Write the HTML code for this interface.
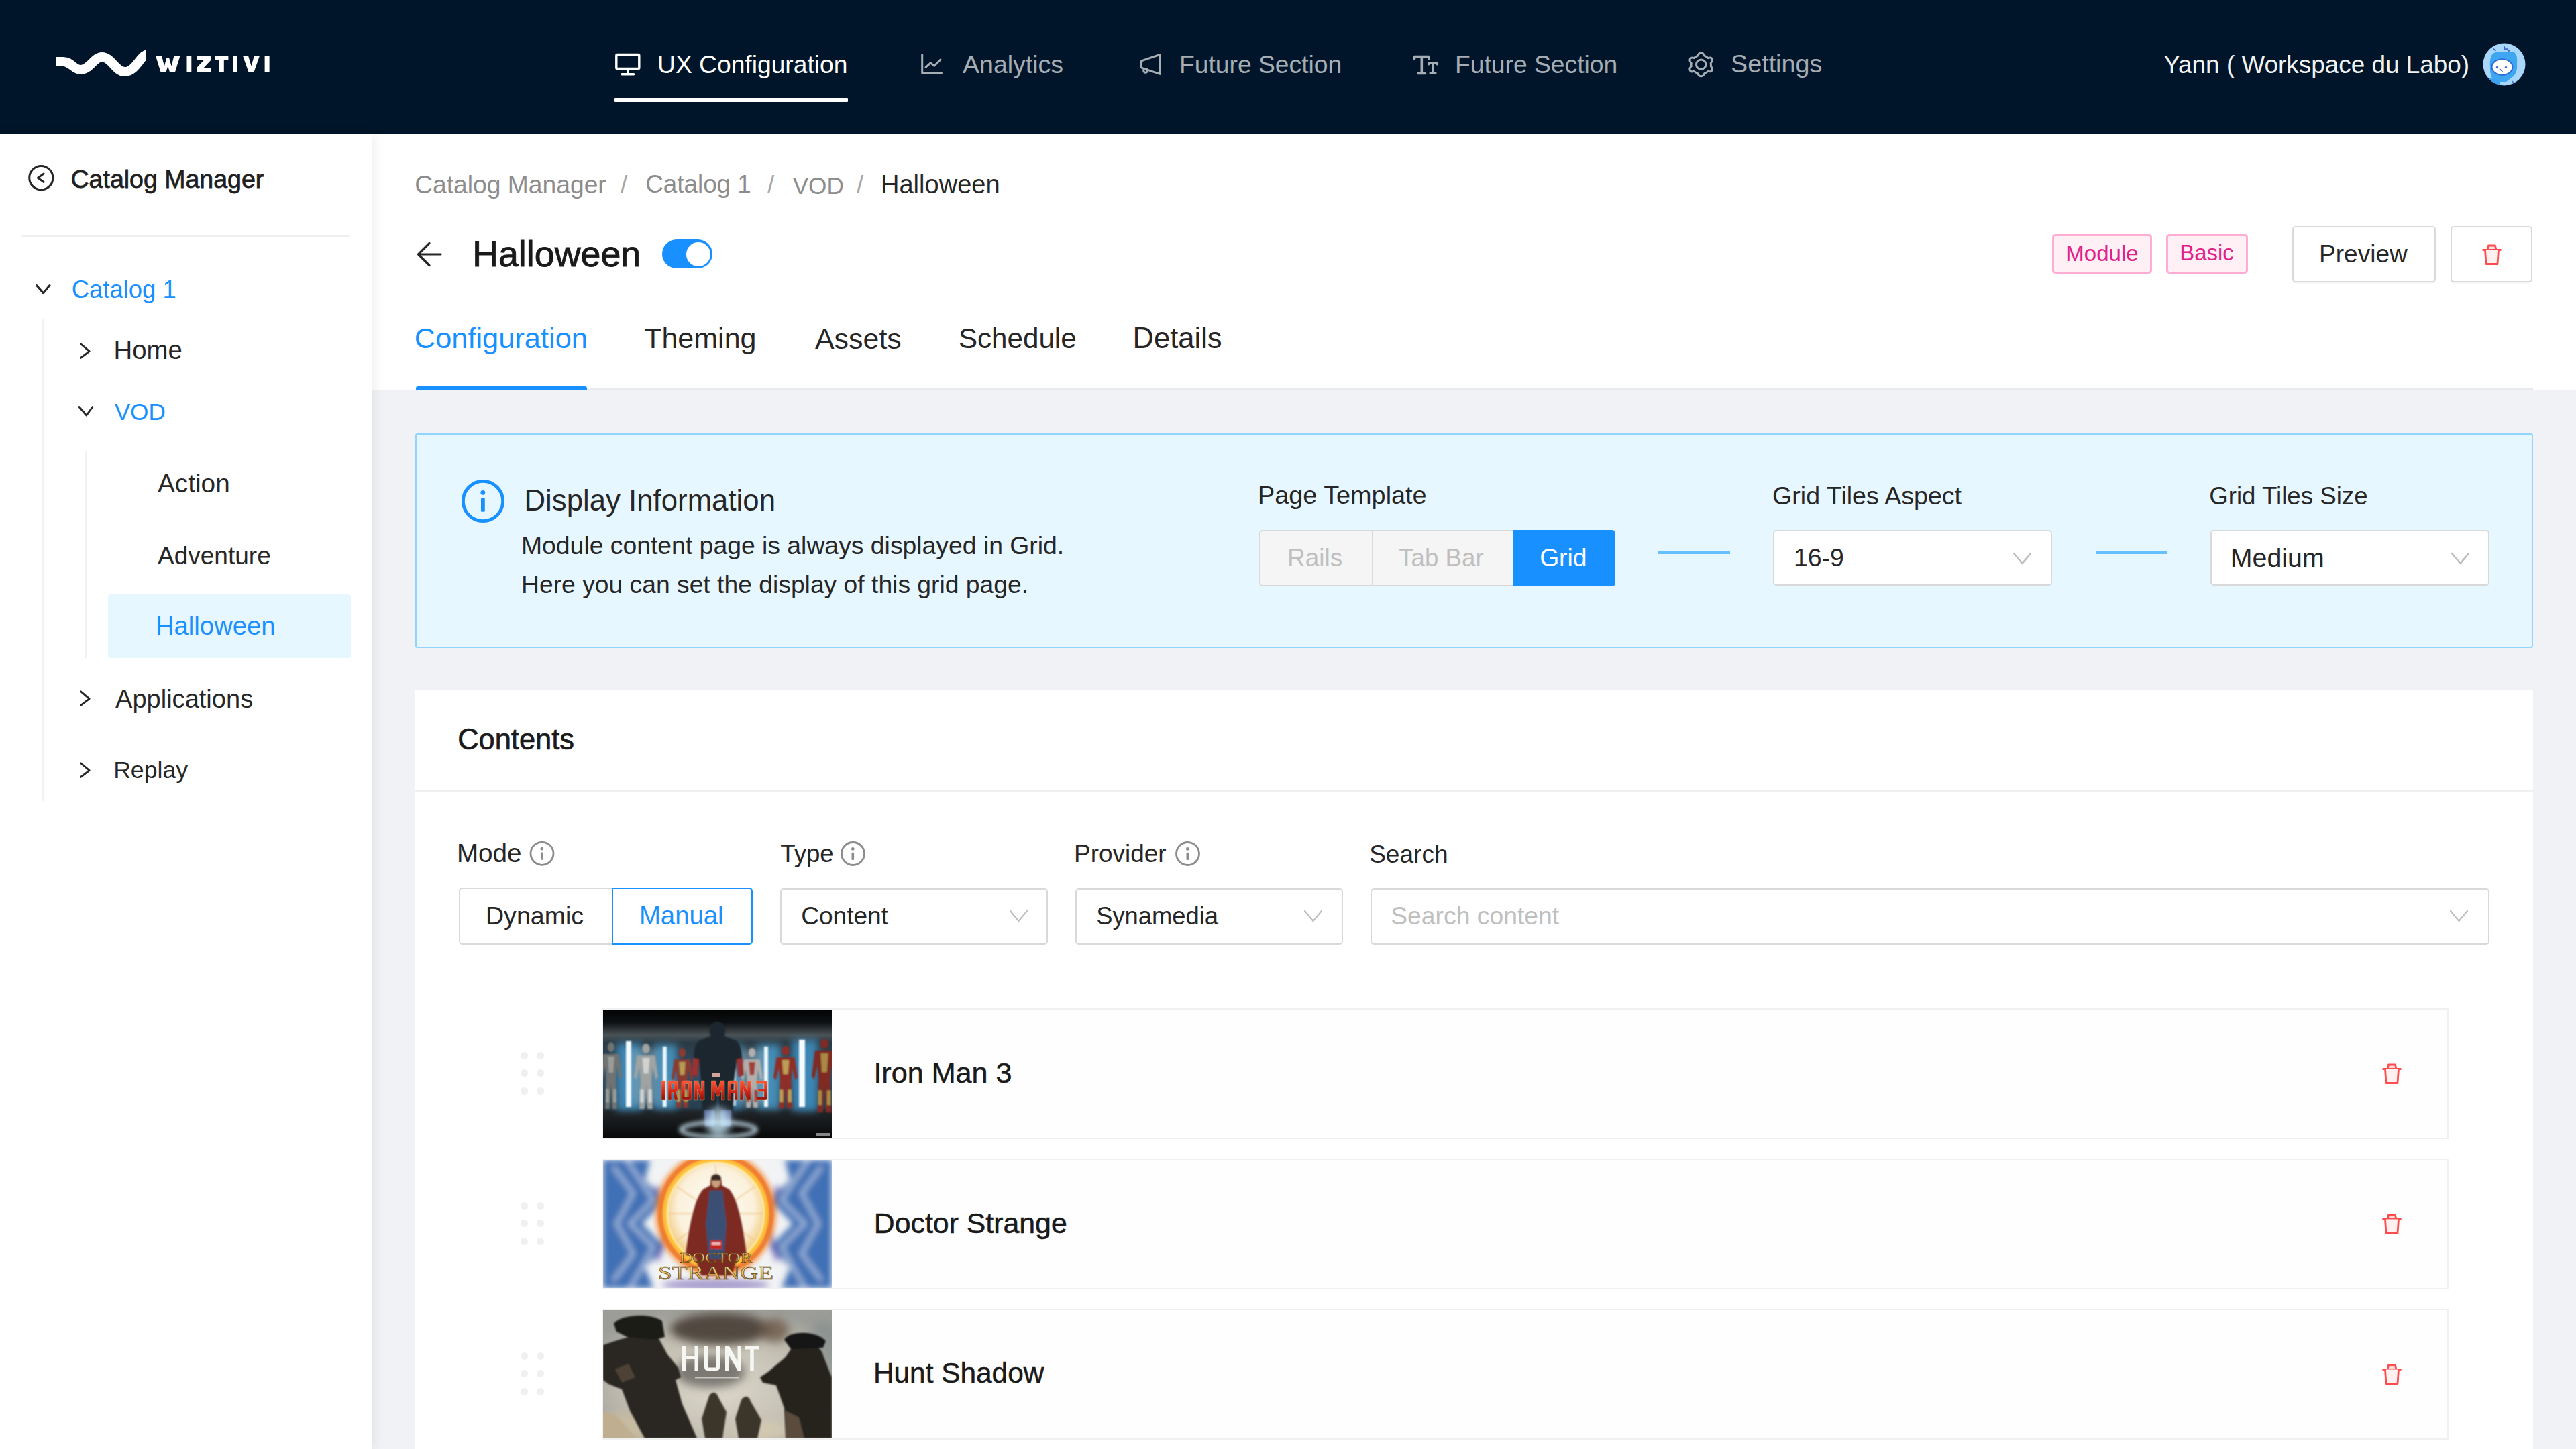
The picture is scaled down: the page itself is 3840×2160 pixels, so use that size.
<!DOCTYPE html>
<html><head><meta charset="utf-8"><title>Halloween</title><style>
html,body{margin:0;padding:0;width:3840px;height:2160px;overflow:hidden;background:#f0f2f5;font-family:"Liberation Sans",sans-serif;}
.a{position:absolute;box-sizing:border-box}
.t{position:absolute;white-space:nowrap;line-height:1;z-index:5}
svg{position:absolute;overflow:visible}
@media (max-width: 2400px){ html{zoom:0.5} }

</style></head><body>
<!-- top header -->
<div class="a" style="left:0;top:0;width:3840px;height:200px;background:#001529"></div>
<!-- logo -->
<svg style="left:0;top:0" width="420" height="200">
 <defs><clipPath id="lgc"><rect x="84" y="60" width="134" height="70"/></clipPath></defs>
 <path clip-path="url(#lgc)" d="M80,92 L94,92 C106,92 110,104 120,104 C134,104 140,85 152,85 C166,85 172,107 186,107 C200,107 208,88 214,84 C218,81 221,80 226,79" fill="none" stroke="#fff" stroke-width="14"/>
 <g fill="#fff">
  <polygon points="232,83.3 241,83.3 245,98.5 248.3,86.8 252.2,86.8 255.5,98.5 259.5,83.3 268.5,83.3 261,107.6 253,107.6 250.25,98.8 247.5,107.6 239.5,107.6"/>
  <rect x="278.5" y="83.3" width="6.8" height="24.3"/>
  <polygon points="293.5,83.3 314.6,83.3 314.6,89.5 303.8,101 314.6,101 314.6,107.6 293,107.6 293,101.3 303.8,89.8 293.5,89.8"/>
  <polygon points="320,83.3 340.4,83.3 340.4,89.8 333.8,89.8 333.8,107.6 326.8,107.6 326.8,89.8 320,89.8"/>
  <rect x="347" y="83.3" width="7" height="24.3"/>
  <polygon points="362,83.3 370,83.3 374.5,98.5 379,83.3 387,83.3 378.5,107.6 370.5,107.6"/>
  <rect x="394.6" y="83.3" width="7" height="24.3"/>
 </g>
</svg>
<!-- nav icons -->
<svg style="left:0;top:0" width="2600" height="200" fill="none" stroke-linejoin="round" stroke-linecap="round">
 <g stroke="#fff" stroke-width="3.4">
  <rect x="918.8" y="81.5" width="34" height="21" rx="1.5"/>
  <path d="M935.8,103 V110.5 M927,110.8 H944.6"/>
 </g>
 <g stroke="#a6adb4" stroke-width="3">
  <path d="M1374.7,81.5 V109 H1403.5"/>
  <path d="M1380,100.4 L1387.3,93.8 L1392.8,98.3 L1402,89"/>
  <path d="M1729,81.5 V110.4 L1703.5,101.8 Q1700.6,100.8 1700.6,98.2 V93.4 Q1700.6,90.9 1703.5,90.2 Z"/>
  <circle cx="1707.6" cy="105.3" r="2.9"/>
  <path d="M2108.5,88 V84.5 H2130 V88 M2119.3,84.5 V109.5 M2114,109.5 H2124.5" stroke-width="3.6"/>
  <path d="M2129.5,96 V94 H2142.5 V96 M2136,94 V109 M2132,109 H2140" stroke-width="3.2"/>
 </g>
 <g transform="translate(2535.7,95.7)" stroke="#a6adb4" stroke-width="3">
  <path d="M0,-17 C3,-17 4,-15 5,-12.5 C7,-11.5 9,-10.5 10.5,-9 C13,-10 15.5,-10 16.5,-7.5 C17.5,-5 16,-3 14.5,-1.5 C14.8,0 14.8,1.5 14.5,3 C16,4.5 17.5,6.5 16.5,9 C15.5,11.5 13,11.5 10.5,10.5 C9,12 7,13 5,14 C4,16.5 3,18 0,18 C-3,18 -4,16.5 -5,14 C-7,13 -9,12 -10.5,10.5 C-13,11.5 -15.5,11.5 -16.5,9 C-17.5,6.5 -16,4.5 -14.5,3 C-14.8,1.5 -14.8,0 -14.5,-1.5 C-16,-3 -17.5,-5 -16.5,-7.5 C-15.5,-10 -13,-10 -10.5,-9 C-9,-10.5 -7,-11.5 -5,-12.5 C-4,-15 -3,-17 0,-17 Z"/>
  <circle cx="0" cy="0.5" r="7.2"/>
 </g>
</svg>
<div class="a" style="left:916px;top:146px;width:348px;height:6px;background:#fff;border-radius:1px"></div>
<!-- avatar -->
<svg style="left:3700px;top:64px" width="66" height="66" viewBox="0 0 66 66">
 <defs><clipPath id="avc"><circle cx="33" cy="32" r="31.5"/></clipPath></defs>
 <circle cx="33" cy="32" r="31.5" fill="#a9d7f9"/>
 <g clip-path="url(#avc)">
  <path d="M12,38 C11,24 13,15 21,14 L45,13 C51,14 53,21 52,31 C53,41 50,48 44,52 L36,58 L20,58 C13,52 12,46 12,38 Z" fill="#3fa6f2"/>
  <path d="M10,52 L26,56 L28,66 L12,66 Z" fill="#3aa0ef"/>
  <path d="M45,57 L50,64" stroke="#4a78d0" stroke-width="1.6"/>
  <path d="M17,9 L20,11 M33,6 L34,10 M37,9 L40,12" stroke="#3b66c8" stroke-width="2" stroke-linecap="round"/>
  <ellipse cx="30" cy="36" rx="15.5" ry="11.8" fill="#fff" stroke="#2f6fd8" stroke-width="2"/>
  <circle cx="22.5" cy="36.5" r="1.7" fill="#5468c8"/><circle cx="35.5" cy="36.5" r="1.7" fill="#5468c8"/>
  <path d="M26.5,39 L30,42.5" stroke="#5468c8" stroke-width="1.6" stroke-linecap="round"/>
 </g>
</svg>

<!-- main white header -->
<div class="a" style="left:555px;top:200px;width:3285px;height:382px;background:#fff"></div>
<div class="a" style="left:620px;top:579px;width:3156px;height:3px;background:#e9eaeb"></div>
<div class="a" style="left:620px;top:576px;width:255px;height:6px;background:#1890ff;border-radius:3px 3px 0 0;z-index:2"></div>

<!-- sidebar -->
<div class="a" style="left:0;top:200px;width:555px;height:1960px;background:#fff;box-shadow:2px 0 16px rgba(0,21,41,0.08);z-index:3"></div>
<svg style="left:0;top:200px;z-index:4" width="555" height="1000" fill="none" stroke-linecap="round" stroke-linejoin="round">
 <circle cx="61.3" cy="65.2" r="17.6" stroke="#262626" stroke-width="3"/>
 <path d="M65.2,59 L56.4,65.2 L65.2,71.5" stroke="#262626" stroke-width="3"/>
 <path d="M54.5,225.5 L64.5,237 L74,225.5" stroke="#262626" stroke-width="3"/>
 <path d="M120.4,312.8 L133.2,323.6 L120.4,333.4" stroke="#262626" stroke-width="2.8"/>
 <path d="M118,406.5 L128.8,419 L138,406.5" stroke="#262626" stroke-width="2.8"/>
 <path d="M120.4,830.8 L133.2,841.6 L120.4,851.4" stroke="#262626" stroke-width="2.8"/>
 <path d="M120.4,937.8 L133.2,948.6 L120.4,958.4" stroke="#262626" stroke-width="2.8"/>
</svg>
<div class="a" style="left:32px;top:351px;width:490px;height:2.5px;background:#f0f0f0;z-index:4"></div>
<div class="a" style="left:62px;top:475px;width:3.5px;height:719px;background:#f2f2f2;z-index:4"></div>
<div class="a" style="left:126px;top:673px;width:3.5px;height:308px;background:#f2f2f2;z-index:4"></div>
<div class="a" style="left:161px;top:886px;width:362px;height:95px;background:#e6f7ff;border-radius:4px;z-index:4"></div>

<!-- page header right -->
<svg style="left:0;top:0" width="1100" height="450" fill="none" stroke-linecap="round" stroke-linejoin="round">
 <path d="M657,379 H625 M640,362.5 L623.5,379 L640,395.5" stroke="#262626" stroke-width="3.2"/>
</svg>
<div class="a" style="left:987px;top:357px;width:75px;height:43px;border-radius:22px;background:#1890ff"></div>
<div class="a" style="left:1023px;top:360.5px;width:36px;height:36px;border-radius:50%;background:#fff"></div>

<div class="a" style="left:3059px;top:349px;width:149px;height:59px;border:3px solid #ffadd2;background:#fff0f6;border-radius:5px"></div>
<div class="a" style="left:3229px;top:349px;width:122px;height:59px;border:3px solid #ffadd2;background:#fff0f6;border-radius:5px"></div>
<div class="a" style="left:3417px;top:337px;width:214px;height:84px;border:2.5px solid #d9d9d9;background:#fff;border-radius:5px;box-shadow:0 2px 1px rgba(0,0,0,0.03)"></div>
<div class="a" style="left:3653px;top:337px;width:122px;height:84px;border:2.5px solid #d9d9d9;background:#fff;border-radius:5px;box-shadow:0 2px 1px rgba(0,0,0,0.03)"></div>
<svg style="left:3700px;top:364px;z-index:2" width="29" height="32" viewBox="0 0 29 32" fill="none" stroke="#ff4d4f" stroke-width="2.8" stroke-linejoin="round" stroke-linecap="round">
<path d="M8,8.5 L9.5,2 H19.5 L21,8.5" fill="#fdd" />
<path d="M1.5,8.5 H27.5"/>
<path d="M4.5,8.5 L6,29.5 H23 L24.5,8.5" fill="#fff1f0"/>
</svg>

<!-- info box -->
<div class="a" style="left:619px;top:646px;width:3157px;height:320px;border:2.5px solid #91d5ff;background:#e6f7ff;border-radius:3px"></div>
<svg style="left:0;top:0" width="760" height="800">
 <circle cx="720" cy="747" r="29.6" fill="none" stroke="#1890ff" stroke-width="4.8"/>
 <circle cx="719.8" cy="734.4" r="3.4" fill="#1890ff"/>
 <rect x="717" y="742.8" width="5.8" height="20" rx="1" fill="#1890ff"/>
</svg>
<div class="a" style="left:1877px;top:790px;width:170px;height:84px;border:2.5px solid #d9d9d9;background:#f5f5f5;border-radius:5px 0 0 5px"></div>
<div class="a" style="left:2047px;top:790px;width:211px;height:84px;border:2.5px solid #d9d9d9;border-left:0;background:#f5f5f5"></div>
<div class="a" style="left:2256px;top:790px;width:152px;height:84px;background:#1890ff;border-radius:0 5px 5px 0"></div>
<div class="a" style="left:2472px;top:822px;width:107px;height:4px;background:#69c0ff"></div>
<div class="a" style="left:3124px;top:822px;width:106px;height:4px;background:#69c0ff"></div>
<div class="a" style="left:2643px;top:790px;width:416px;height:83px;border:2.5px solid #d9d9d9;background:#fff;border-radius:5px"></div>
<div class="a" style="left:3295px;top:790px;width:416px;height:83px;border:2.5px solid #d9d9d9;background:#fff;border-radius:5px"></div>
<svg style="left:0;top:0" width="3800" height="900" fill="none" stroke="#bfbfbf" stroke-width="2.2" stroke-linecap="round" stroke-linejoin="round">
 <path d="M3002,825 L3014.5,840 L3027,825"/>
 <path d="M3655,825 L3667.5,840 L3680,825"/>
</svg>

<!-- contents card -->
<div class="a" style="left:618px;top:1029px;width:3158px;height:1131px;background:#fff"></div>
<div class="a" style="left:618px;top:1177px;width:3158px;height:2.5px;background:#f0f0f0"></div>
<svg style="left:0;top:0" width="3800" height="1500" fill="none" stroke-linecap="round" stroke-linejoin="round">
 <g stroke="#8c8c8c" stroke-width="2.8">
  <circle cx="808" cy="1272.3" r="17"/>
  <circle cx="1271.5" cy="1272.5" r="17"/>
  <circle cx="1770.5" cy="1272.5" r="17"/>
 </g>
 <g fill="#8c8c8c" stroke="none">
  <circle cx="807.8" cy="1265.2" r="2.4"/><rect x="806" y="1270.5" width="3.6" height="11.3" rx="1"/>
  <circle cx="1271.3" cy="1265.4" r="2.4"/><rect x="1269.5" y="1270.7" width="3.6" height="11.3" rx="1"/>
  <circle cx="1770.3" cy="1265.4" r="2.4"/><rect x="1768.5" y="1270.7" width="3.6" height="11.3" rx="1"/>
 </g>
</svg>
<div class="a" style="left:684px;top:1323px;width:230px;height:85px;border:2.5px solid #d9d9d9;border-right:0;background:#fff;border-radius:5px 0 0 5px"></div>
<div class="a" style="left:912px;top:1323px;width:210px;height:85px;border:2.5px solid #1890ff;background:#fff;border-radius:0 5px 5px 0"></div>
<div class="a" style="left:1163px;top:1324px;width:399px;height:84px;border:2.5px solid #d9d9d9;background:#fff;border-radius:5px"></div>
<div class="a" style="left:1603px;top:1324px;width:399px;height:84px;border:2.5px solid #d9d9d9;background:#fff;border-radius:5px"></div>
<div class="a" style="left:2043px;top:1324px;width:1668px;height:84px;border:2.5px solid #d9d9d9;background:#fff;border-radius:5px"></div>
<!-- re-draw chevrons above select boxes -->
<svg style="left:0;top:0;z-index:2" width="3800" height="1500" fill="none" stroke="#bfbfbf" stroke-width="2.2" stroke-linecap="round" stroke-linejoin="round">
 <path d="M1506,1358 L1518.5,1373 L1531,1358"/>
 <path d="M1945,1358 L1957.5,1373 L1970,1358"/>
 <path d="M3653,1358 L3665.5,1373 L3678,1358"/>
 <path d="M3002,825 L3014.5,840 L3027,825"/>
 <path d="M3655,825 L3667.5,840 L3680,825"/>
</svg>

<!-- list rows -->
<div class="a" style="left:897px;top:1503px;width:2753px;height:195px;border:2px solid #f1f1f1;background:#fefefe"></div>
<svg style="left:899px;top:1505px;z-index:1;overflow:hidden" width="341" height="191" viewBox="0 0 341 191">
<defs>
 <linearGradient id="im_v" x1="0" y1="0" x2="0" y2="1">
  <stop offset="0" stop-color="#030404"/><stop offset="0.1" stop-color="#0d1012"/><stop offset="0.2" stop-color="#4a5256"/><stop offset="0.26" stop-color="#2a3a44"/>
  <stop offset="0.5" stop-color="#305068"/><stop offset="0.76" stop-color="#27404f"/><stop offset="0.8" stop-color="#202427"/><stop offset="1" stop-color="#08090a"/></linearGradient>
 <filter id="im_b1" x="-50%" y="-50%" width="200%" height="200%"><feGaussianBlur stdDeviation="6"/></filter>
 <filter id="im_b2" x="-20%" y="-20%" width="140%" height="140%"><feGaussianBlur stdDeviation="0.9"/></filter>
 <filter id="im_b3" x="-50%" y="-50%" width="200%" height="200%"><feGaussianBlur stdDeviation="3"/></filter>
 <linearGradient id="im_red" x1="0" y1="0" x2="0" y2="1"><stop offset="0" stop-color="#ff5a3a"/><stop offset="0.55" stop-color="#d0281a"/><stop offset="1" stop-color="#8a120a"/></linearGradient>
</defs>
<rect width="341" height="191" fill="url(#im_v)"/>
<g filter="url(#im_b1)" opacity="0.85">
 <rect x="20" y="50" width="38" height="100" fill="#3f92c4"/><rect x="76" y="52" width="34" height="96" fill="#4a9ac8"/><rect x="178" y="52" width="30" height="96" fill="#3a86b6"/><rect x="230" y="52" width="34" height="96" fill="#4a9ac8"/><rect x="282" y="45" width="38" height="106" fill="#3f92c4"/>
 <rect x="40" y="60" width="40" height="80" fill="#9bbccc" opacity="0.5"/><rect x="200" y="60" width="40" height="80" fill="#9bbccc" opacity="0.5"/>
</g>
<g filter="url(#im_b2)">
 <rect x="34" y="47" width="8" height="98" fill="#f4fafd"/>
 <rect x="89" y="55" width="6" height="90" fill="#ecf6fb"/>
 <rect x="193" y="55" width="5" height="88" fill="#d8ecf4" opacity="0.85"/>
 <rect x="240" y="55" width="6" height="90" fill="#ecf6fb"/>
 <rect x="292" y="45" width="9" height="100" fill="#f4fafd"/>
 <g opacity="1"><ellipse cx="12" cy="56" rx="5.1" ry="7" fill="#6f7371"/><path d="M0.0,66 L24.0,66 L28.0,99.0 L24.8,103.9 L20.8,84.3 L19.2,103.9 L20.8,148.0 L13.9,148.0 L12,110.8 L10.1,148.0 L3.2,148.0 L4.8,103.9 L3.2,84.3 L-0.8,103.9 L-4.0,99.0 Z" fill="#6f7371"/><path d="M7.2,70 L16.8,70 L15.2,94.1 L8.8,94.1 Z" fill="#9a9d9a"/><rect x="4.0" y="118.6" width="4.8" height="19.6" fill="#9a9d9a"/><rect x="15.2" y="118.6" width="4.8" height="19.6" fill="#9a9d9a"/></g><g opacity="1"><ellipse cx="64" cy="58" rx="5.8" ry="7" fill="#9fa3a2"/><path d="M50.5,68 L77.5,68 L82.0,100.0 L78.4,104.8 L73.9,85.6 L72.1,104.8 L73.9,148.0 L66.2,148.0 L64,111.5 L61.8,148.0 L54.1,148.0 L55.9,104.8 L54.1,85.6 L49.6,104.8 L46.0,100.0 Z" fill="#9fa3a2"/><path d="M58.6,72 L69.4,72 L67.6,95.2 L60.4,95.2 Z" fill="#d0d3d0"/><rect x="55.0" y="119.2" width="5.4" height="19.2" fill="#d0d3d0"/><rect x="67.6" y="119.2" width="5.4" height="19.2" fill="#d0d3d0"/></g><g opacity="1"><ellipse cx="118" cy="64" rx="5.1" ry="7" fill="#8a3a33"/><path d="M106.0,74 L130.0,74 L134.0,102.0 L130.8,106.4 L126.8,88.8 L125.2,106.4 L126.8,146.0 L119.9,146.0 L118,112.6 L116.1,146.0 L109.2,146.0 L110.8,106.4 L109.2,88.8 L105.2,106.4 L102.0,102.0 Z" fill="#8a3a33"/><path d="M113.2,78 L122.8,78 L121.2,97.6 L114.8,97.6 Z" fill="#b59a55"/><rect x="110.0" y="119.6" width="4.8" height="17.6" fill="#b59a55"/><rect x="121.2" y="119.6" width="4.8" height="17.6" fill="#b59a55"/></g><g opacity="1"><ellipse cx="222" cy="64" rx="5.1" ry="7" fill="#b2aeab"/><path d="M210.0,74 L234.0,74 L238.0,102.0 L234.8,106.4 L230.8,88.8 L229.2,106.4 L230.8,146.0 L223.9,146.0 L222,112.6 L220.1,146.0 L213.2,146.0 L214.8,106.4 L213.2,88.8 L209.2,106.4 L206.0,102.0 Z" fill="#b2aeab"/><path d="M217.2,78 L226.8,78 L225.2,97.6 L218.8,97.6 Z" fill="#a04038"/><rect x="214.0" y="119.6" width="4.8" height="17.6" fill="#a04038"/><rect x="225.2" y="119.6" width="4.8" height="17.6" fill="#a04038"/></g><g opacity="1"><ellipse cx="272" cy="61" rx="5.8" ry="7" fill="#8e2f28"/><path d="M258.5,71 L285.5,71 L290.0,101.0 L286.4,105.6 L281.9,87.2 L280.1,105.6 L281.9,147.0 L274.2,147.0 L272,112.0 L269.8,147.0 L262.1,147.0 L263.9,105.6 L262.1,87.2 L257.6,105.6 L254.0,101.0 Z" fill="#8e2f28"/><path d="M266.6,75 L277.4,75 L275.6,96.4 L268.4,96.4 Z" fill="#bd9d55"/><rect x="263.0" y="119.4" width="5.4" height="18.4" fill="#bd9d55"/><rect x="275.6" y="119.4" width="5.4" height="18.4" fill="#bd9d55"/></g><g opacity="1"><ellipse cx="330" cy="51" rx="6.1" ry="7" fill="#7f2a24"/><path d="M315.8,61 L344.2,61 L349.0,99.0 L345.2,104.4 L340.4,82.8 L338.6,104.4 L340.4,153.0 L332.3,153.0 L330,112.0 L327.7,153.0 L319.6,153.0 L321.4,104.4 L319.6,82.8 L314.8,104.4 L311.0,99.0 Z" fill="#7f2a24"/><path d="M324.3,65 L335.7,65 L333.8,93.6 L326.2,93.6 Z" fill="#a98a45"/><rect x="320.5" y="120.6" width="5.7" height="21.6" fill="#a98a45"/><rect x="333.8" y="120.6" width="5.7" height="21.6" fill="#a98a45"/></g>
 <path d="M170,18 C178,18 183,24 182,34 L181,40 L198,46 C204,50 206,58 207,70 L210,98 L203,100 L199,76 L196,104 L194,150 L190,174 L176,174 L171,122 L166,174 L152,174 L148,150 L146,104 L143,76 L139,100 L132,98 L135,70 C136,58 138,50 144,46 L160,40 L159,34 C158,24 162,18 170,18 Z" fill="#1b252d"/>
 <path d="M134,72 L143,74 L141,100 L132,98 Z" fill="#9a3030"/><path d="M199,74 L208,72 L210,98 L201,100 Z" fill="#9a3030"/>
 <path d="M151,150 L166,150 L166,174 L152,174 Z M176,150 L191,150 L190,174 L176,174 Z" fill="#5a6a9a"/>
</g>
<ellipse cx="172" cy="179" rx="56" ry="11" fill="none" stroke="#d8f2ff" stroke-width="5" filter="url(#im_b3)" opacity="0.9"/>
<ellipse cx="172" cy="168" rx="18" ry="22" fill="#cdeefc" filter="url(#im_b1)" opacity="0.75"/>
<g fill="url(#im_red)" stroke="#e8b070" stroke-width="0.4" fill-rule="evenodd">
 <rect x="87" y="106" width="6" height="29"/>
 <path d="M97,106 H108 Q111,106 111,109 V120 Q111,122 109,122.5 L111.5,135 H106.5 L104.5,123.5 H102 V135 H97 Z M102,110.5 V118.5 H106 V110.5 Z"/>
 <path d="M117,109 Q117,106 120,106 H129 Q132,106 132,109 V132 Q132,135 129,135 H120 Q117,135 117,132 Z M121.8,110.5 V130.5 H127.2 V110.5 Z"/>
 <path d="M136,135 V106 H141.5 L146.5,122 V106 H151 V135 H145.5 L140.5,119 V135 Z"/>
 <path d="M161.5,135 V106 H167.5 L171.2,120 L175,106 H181 V135 H176.5 V120 L173,129 H169.5 L166,120 V135 Z"/>
 <path d="M186,135 V109 Q186,106 189,106 H197.6 Q200.6,106 200.6,109 V135 H196 V124.5 H190.6 V135 Z M190.6,110.5 V120 H196 V110.5 Z"/>
 <path d="M204,135 V106 H209.5 L215,122 V106 H220 V135 H214.5 L209,119 V135 Z"/>
 <path d="M228,106 H242 Q245,106 245,109 V132 Q245,135 242,135 H228 V130.5 H240 V122.5 H231 V118.5 H240 V110.5 H228 Z"/>
</g>
<rect x="163" y="95" width="12" height="5" fill="#e8b0a8" opacity="0.9"/>
<rect x="318" y="184" width="21" height="4" fill="#d8d8d8" opacity="0.6"/>
</svg>
<div class="a" style="left:775.5px;top:1567.5px;width:11px;height:11px;border-radius:50%;background:#f0f0f0"></div>
<div class="a" style="left:775.5px;top:1594.0px;width:11px;height:11px;border-radius:50%;background:#f0f0f0"></div>
<div class="a" style="left:775.5px;top:1620.5px;width:11px;height:11px;border-radius:50%;background:#f0f0f0"></div>
<div class="a" style="left:799.5px;top:1567.5px;width:11px;height:11px;border-radius:50%;background:#f0f0f0"></div>
<div class="a" style="left:799.5px;top:1594.0px;width:11px;height:11px;border-radius:50%;background:#f0f0f0"></div>
<div class="a" style="left:799.5px;top:1620.5px;width:11px;height:11px;border-radius:50%;background:#f0f0f0"></div>
<svg style="left:3551px;top:1585px;z-index:2" width="29" height="32" viewBox="0 0 29 32" fill="none" stroke="#ff4d4f" stroke-width="2.8" stroke-linejoin="round" stroke-linecap="round">
<path d="M8,8.5 L9.5,2 H19.5 L21,8.5" fill="#fdd" />
<path d="M1.5,8.5 H27.5"/>
<path d="M4.5,8.5 L6,29.5 H23 L24.5,8.5" fill="#fff1f0"/>
</svg>
<div class="a" style="left:897px;top:1727px;width:2753px;height:195px;border:2px solid #f1f1f1;background:#fefefe"></div>
<svg style="left:899px;top:1729px;z-index:1;overflow:hidden" width="341" height="191" viewBox="0 0 341 191">
<defs>
 <filter id="ds_b1" x="-50%" y="-50%" width="200%" height="200%"><feGaussianBlur stdDeviation="5"/></filter>
 <filter id="ds_b2" x="-20%" y="-20%" width="140%" height="140%"><feGaussianBlur stdDeviation="1.1"/></filter>
 <filter id="ds_b3" x="-50%" y="-50%" width="200%" height="200%"><feGaussianBlur stdDeviation="3.5"/></filter>
 <linearGradient id="ds_txt" x1="0" y1="0" x2="0" y2="1"><stop offset="0" stop-color="#fff4c0"/><stop offset="0.5" stop-color="#e8c46a"/><stop offset="1" stop-color="#a8782a"/></linearGradient>
 <radialGradient id="ds_core" cx="50%" cy="45%" r="50%"><stop offset="0" stop-color="#fffdf6"/><stop offset="0.75" stop-color="#fbf1dc"/><stop offset="1" stop-color="#f4cf8a"/></radialGradient>
</defs>
<rect width="341" height="191" fill="#f2f3f5"/>
<g filter="url(#ds_b1)">
 <path d="M0,0 L70,0 L62,30 L92,60 L58,95 L92,130 L62,160 L75,191 L0,191 Z" fill="#4070b5"/>
 <path d="M341,0 L271,0 L279,30 L249,60 L283,95 L249,130 L279,160 L266,191 L341,191 Z" fill="#4070b5"/>
 <path d="M15,10 L45,50 L20,95 L45,140 L15,180 M35,0 L75,60 L40,95 L75,130 L40,191" stroke="#c4d4ea" stroke-width="5" fill="none" opacity="0.8"/>
 <path d="M326,10 L296,50 L321,95 L296,140 L326,180 M306,0 L266,60 L301,95 L266,130 L301,191" stroke="#c4d4ea" stroke-width="5" fill="none" opacity="0.8"/>
 <path d="M80,40 L100,95 L80,150" stroke="#6f64b0" stroke-width="9" fill="none" opacity="0.7"/>
 <path d="M261,40 L241,95 L261,150" stroke="#6f64b0" stroke-width="9" fill="none" opacity="0.7"/>
 <ellipse cx="168" cy="186" rx="80" ry="9" fill="#7a6ab8" opacity="0.6"/>
</g>
<g filter="url(#ds_b2)">
 <ellipse cx="168" cy="80" rx="76" ry="80" fill="url(#ds_core)"/>
 <path d="M110,40 L226,120 M226,40 L110,120 M168,8 V150 M96,80 H240" stroke="#f1c88a" stroke-width="2.5" opacity="0.6"/>
 <ellipse cx="168" cy="80" rx="80" ry="84" fill="none" stroke="#ec6a22" stroke-width="13" opacity="0.9"/>
 <ellipse cx="168" cy="80" rx="76" ry="80" fill="none" stroke="#ffc23a" stroke-width="7"/>
 <ellipse cx="168" cy="80" rx="72" ry="76" fill="none" stroke="#fff2a8" stroke-width="2"/>
</g>
<ellipse cx="168" cy="80" rx="86" ry="90" fill="none" stroke="#f5862e" stroke-width="9" filter="url(#ds_b3)" opacity="0.75"/>
<g filter="url(#ds_b2)">
 <path d="M168,24 C175,24 178,30 177,38 L188,44 C200,58 208,92 214,142 L200,146 L192,172 L146,172 L138,146 L123,142 C129,92 137,58 149,44 L160,38 C159,30 162,24 168,24 Z" fill="#7c2a22"/>
 <path d="M159,46 L178,46 L184,95 L180,148 L158,148 L153,95 Z" fill="#3a4f75"/>
 <ellipse cx="168.5" cy="33" rx="6.5" ry="8.5" fill="#c9a07c"/>
 <path d="M161,26 C164,20 174,20 176,27 L175,31 L162,31 Z" fill="#3a2a20"/>
 <rect x="160" y="120" width="17" height="13" fill="#c8201d"/><rect x="162" y="123" width="13" height="4" fill="#fff" opacity="0.7"/>
</g>
<g font-family="Liberation Serif" fill="url(#ds_txt)" stroke="#5a3c0c" stroke-width="0.6" text-anchor="middle">
 <text x="168" y="153" font-size="21" textLength="108" lengthAdjust="spacingAndGlyphs">DOCTOR</text>
 <text x="168" y="178" font-size="29" textLength="172" lengthAdjust="spacingAndGlyphs">STRANGE</text>
</g>
</svg>
<div class="a" style="left:775.5px;top:1791.5px;width:11px;height:11px;border-radius:50%;background:#f0f0f0"></div>
<div class="a" style="left:775.5px;top:1818.0px;width:11px;height:11px;border-radius:50%;background:#f0f0f0"></div>
<div class="a" style="left:775.5px;top:1844.5px;width:11px;height:11px;border-radius:50%;background:#f0f0f0"></div>
<div class="a" style="left:799.5px;top:1791.5px;width:11px;height:11px;border-radius:50%;background:#f0f0f0"></div>
<div class="a" style="left:799.5px;top:1818.0px;width:11px;height:11px;border-radius:50%;background:#f0f0f0"></div>
<div class="a" style="left:799.5px;top:1844.5px;width:11px;height:11px;border-radius:50%;background:#f0f0f0"></div>
<svg style="left:3551px;top:1809px;z-index:2" width="29" height="32" viewBox="0 0 29 32" fill="none" stroke="#ff4d4f" stroke-width="2.8" stroke-linejoin="round" stroke-linecap="round">
<path d="M8,8.5 L9.5,2 H19.5 L21,8.5" fill="#fdd" />
<path d="M1.5,8.5 H27.5"/>
<path d="M4.5,8.5 L6,29.5 H23 L24.5,8.5" fill="#fff1f0"/>
</svg>
<div class="a" style="left:897px;top:1951px;width:2753px;height:195px;border:2px solid #f1f1f1;background:#fefefe"></div>
<svg style="left:899px;top:1953px;z-index:1;overflow:hidden" width="341" height="191" viewBox="0 0 341 191">
<defs>
 <radialGradient id="hu_bg" cx="50%" cy="60%" r="65%"><stop offset="0" stop-color="#ddd8cc"/><stop offset="0.6" stop-color="#c3beb2"/><stop offset="1" stop-color="#9c9d98"/></radialGradient>
 <filter id="hu_b1" x="-50%" y="-50%" width="200%" height="200%"><feGaussianBlur stdDeviation="7"/></filter>
 <filter id="hu_b2" x="-20%" y="-20%" width="140%" height="140%"><feGaussianBlur stdDeviation="1.2"/></filter>
</defs>
<rect width="341" height="191" fill="url(#hu_bg)"/>
<g filter="url(#hu_b1)">
 <ellipse cx="175" cy="28" rx="75" ry="24" fill="#3e372e" opacity="0.85"/>
 <ellipse cx="255" cy="30" rx="22" ry="18" fill="#6a5848" opacity="0.8"/>
 <ellipse cx="160" cy="92" rx="52" ry="24" fill="#5e5b55" opacity="0.75"/>
 <ellipse cx="30" cy="175" rx="45" ry="22" fill="#cbbd9f" opacity="0.8"/>
 <ellipse cx="235" cy="180" rx="45" ry="15" fill="#d8ccb0" opacity="0.7"/>
 <ellipse cx="330" cy="60" rx="25" ry="45" fill="#7d8a8a" opacity="0.5"/>
</g>
<g filter="url(#hu_b2)">
 <path d="M38,40 C50,30 72,32 84,44 L96,66 L112,86 L116,100 L108,104 L118,140 L140,191 L62,191 L40,150 L28,118 L8,110 L0,104 L0,52 L24,44 Z" fill="#2a2721"/>
 <path d="M16,20 C26,6 72,4 88,16 L92,40 L78,44 L36,40 L20,32 Z" fill="#1b1a17"/>
 <path d="M18,88 L38,80 L48,100 L28,108 Z" fill="#4d4236"/>
 <path d="M0,191 L0,150 L20,158 L50,191 Z" fill="#bfae90"/>
 <path d="M284,52 C300,44 318,48 326,62 L336,88 L341,100 L341,191 L272,191 L270,146 L258,112 L238,108 L234,100 L246,92 L272,70 Z" fill="#25241f"/>
 <path d="M270,44 C278,30 318,30 332,46 L328,56 L280,58 Z" fill="#191815"/>
 <path d="M272,150 L292,160 L300,191 L272,191 Z" fill="#5a4c3c"/>
 <path d="M158,128 C162,120 170,122 172,130 L184,152 L178,191 L152,191 L147,162 Z" fill="#3a342c"/>
 <path d="M206,134 C211,126 218,128 220,136 L236,164 L230,191 L202,191 L197,162 Z" fill="#3a342c"/>
</g>
<g fill="#f6f6f3">
 <path d="M118,53 h5.5 v15 h13 v-15 h5.5 v37 h-5.5 v-17 h-13 v17 h-5.5 Z"/>
 <path d="M151,53 h5.5 v31 q0,1.5 1.5,1.5 h9 q1.5,0 1.5,-1.5 v-31 h5.5 v32 q0,5 -5,5 h-13 q-5,0 -5,-5 Z"/>
 <path d="M182,53 h5.5 l13,23 v-23 h5.5 v37 h-5.5 l-13,-23 v23 h-5.5 Z"/>
 <path d="M211,53 h22 v5.5 h-8.2 v31.5 h-5.6 v-31.5 h-8.2 Z"/>
 <rect x="137" y="99" width="66" height="2.5" opacity="0.6"/>
</g>
</svg>
<div class="a" style="left:775.5px;top:2015.5px;width:11px;height:11px;border-radius:50%;background:#f0f0f0"></div>
<div class="a" style="left:775.5px;top:2042.0px;width:11px;height:11px;border-radius:50%;background:#f0f0f0"></div>
<div class="a" style="left:775.5px;top:2068.5px;width:11px;height:11px;border-radius:50%;background:#f0f0f0"></div>
<div class="a" style="left:799.5px;top:2015.5px;width:11px;height:11px;border-radius:50%;background:#f0f0f0"></div>
<div class="a" style="left:799.5px;top:2042.0px;width:11px;height:11px;border-radius:50%;background:#f0f0f0"></div>
<div class="a" style="left:799.5px;top:2068.5px;width:11px;height:11px;border-radius:50%;background:#f0f0f0"></div>
<svg style="left:3551px;top:2033px;z-index:2" width="29" height="32" viewBox="0 0 29 32" fill="none" stroke="#ff4d4f" stroke-width="2.8" stroke-linejoin="round" stroke-linecap="round">
<path d="M8,8.5 L9.5,2 H19.5 L21,8.5" fill="#fdd" />
<path d="M1.5,8.5 H27.5"/>
<path d="M4.5,8.5 L6,29.5 H23 L24.5,8.5" fill="#fff1f0"/>
</svg>

<div class="t" style="left:980.02px;top:77.87px;font-size:37.22px;color:#ffffff;">UX Configuration</div>
<div class="t" style="left:1435.00px;top:77.60px;font-size:37.53px;color:#a6adb4;">Analytics</div>
<div class="t" style="left:1758.02px;top:77.83px;font-size:37.26px;color:#a6adb4;">Future Section</div>
<div class="t" style="left:2169.02px;top:77.83px;font-size:37.26px;color:#a6adb4;">Future Section</div>
<div class="t" style="left:2580.12px;top:77.47px;font-size:37.68px;color:#a6adb4;">Settings</div>
<div class="t" style="left:3225.26px;top:78.64px;font-size:36.89px;color:#f2f2f2;">Yann ( Workspace du Labo)</div>
<div class="t" style="left:105.52px;top:249.10px;font-size:37.53px;color:#1f1f1f;-webkit-text-stroke:0.8px #1f1f1f;">Catalog Manager</div>
<div class="t" style="left:106.68px;top:414.49px;font-size:36.48px;color:#1890ff;">Catalog 1</div>
<div class="t" style="left:169.43px;top:503.37px;font-size:38.39px;color:#262626;">Home</div>
<div class="t" style="left:170.65px;top:596.08px;font-size:35.20px;color:#1890ff;">VOD</div>
<div class="t" style="left:235.00px;top:702.07px;font-size:38.75px;color:#262626;">Action</div>
<div class="t" style="left:235.00px;top:809.53px;font-size:37.03px;color:#262626;">Adventure</div>
<div class="t" style="left:231.94px;top:914.47px;font-size:38.27px;color:#1890ff;">Halloween</div>
<div class="t" style="left:172.00px;top:1022.65px;font-size:38.06px;color:#262626;">Applications</div>
<div class="t" style="left:169.15px;top:1130.70px;font-size:35.64px;color:#262626;">Replay</div>
<div class="t" style="left:618.14px;top:256.85px;font-size:37.24px;color:#8c8c8c;">Catalog Manager</div>
<div class="t" style="left:925.00px;top:258.39px;font-size:36.60px;color:#a6a6a6;">/</div>
<div class="t" style="left:962.16px;top:257.18px;font-size:36.84px;color:#8c8c8c;">Catalog 1</div>
<div class="t" style="left:1144.00px;top:258.39px;font-size:36.60px;color:#a6a6a6;">/</div>
<div class="t" style="left:1181.65px;top:258.58px;font-size:35.20px;color:#8c8c8c;">VOD</div>
<div class="t" style="left:1277.00px;top:258.39px;font-size:36.60px;color:#a6a6a6;">/</div>
<div class="t" style="left:1312.96px;top:256.15px;font-size:38.05px;color:#262626;">Halloween</div>
<div class="t" style="left:704.15px;top:352.28px;font-size:53.78px;color:#1a1a1a;-webkit-text-stroke:0.9px #1a1a1a;">Halloween</div>
<div class="t" style="left:617.83px;top:483.11px;font-size:43.40px;color:#1890ff;">Configuration</div>
<div class="t" style="left:960.14px;top:483.41px;font-size:43.04px;color:#262626;">Theming</div>
<div class="t" style="left:1215.00px;top:483.53px;font-size:42.91px;color:#262626;">Assets</div>
<div class="t" style="left:1428.89px;top:484.17px;font-size:42.16px;color:#262626;">Schedule</div>
<div class="t" style="left:1688.52px;top:482.99px;font-size:43.54px;color:#262626;">Details</div>
<div class="t" style="left:3079.36px;top:360.94px;font-size:33.02px;color:#e0218a;">Module</div>
<div class="t" style="left:3249.37px;top:361.03px;font-size:32.91px;color:#e0218a;">Basic</div>
<div class="t" style="left:3457.03px;top:360.49px;font-size:37.07px;color:#262626;">Preview</div>
<div class="t" style="left:781.50px;top:723.81px;font-size:43.76px;color:#262626;">Display Information</div>
<div class="t" style="left:777.01px;top:795.27px;font-size:37.33px;color:#262626;">Module content page is always displayed in Grid.</div>
<div class="t" style="left:777.02px;top:853.32px;font-size:37.28px;color:#262626;">Here you can set the display of this grid page.</div>
<div class="t" style="left:1874.97px;top:719.85px;font-size:37.83px;color:#262626;">Page Template</div>
<div class="t" style="left:1919.04px;top:813.58px;font-size:36.97px;color:#bfbfbf;">Rails</div>
<div class="t" style="left:2085.27px;top:813.84px;font-size:36.66px;color:#bfbfbf;">Tab Bar</div>
<div class="t" style="left:2295.14px;top:813.31px;font-size:37.29px;color:#ffffff;">Grid</div>
<div class="t" style="left:2642.12px;top:721.05px;font-size:37.58px;color:#262626;">Grid Tiles Aspect</div>
<div class="t" style="left:2674.01px;top:813.18px;font-size:37.43px;color:#262626;">16-9</div>
<div class="t" style="left:3293.17px;top:721.81px;font-size:36.69px;color:#262626;">Grid Tiles Size</div>
<div class="t" style="left:3324.86px;top:811.60px;font-size:39.30px;color:#262626;">Medium</div>
<div class="t" style="left:682.18px;top:1081.07px;font-size:43.44px;color:#1a1a1a;-webkit-text-stroke:0.7px #1a1a1a;">Contents</div>
<div class="t" style="left:680.91px;top:1253.14px;font-size:38.66px;color:#262626;">Mode</div>
<div class="t" style="left:1163.27px;top:1254.83px;font-size:36.67px;color:#262626;">Type</div>
<div class="t" style="left:1601.05px;top:1254.62px;font-size:36.91px;color:#262626;">Provider</div>
<div class="t" style="left:2041.15px;top:1254.51px;font-size:37.05px;color:#262626;">Search</div>
<div class="t" style="left:723.99px;top:1347.07px;font-size:37.57px;color:#262626;">Dynamic</div>
<div class="t" style="left:952.93px;top:1346.41px;font-size:38.34px;color:#1890ff;">Manual</div>
<div class="t" style="left:1194.14px;top:1347.46px;font-size:37.10px;color:#262626;">Content</div>
<div class="t" style="left:1634.18px;top:1348.09px;font-size:36.36px;color:#262626;">Synamedia</div>
<div class="t" style="left:2073.13px;top:1347.27px;font-size:37.33px;color:#bfbfbf;">Search content</div>
<div class="t" style="left:1302.40px;top:1578.36px;font-size:43.11px;color:#1a1a1a;-webkit-text-stroke:0.55px #1a1a1a;">Iron Man 3</div>
<div class="t" style="left:1302.85px;top:1801.62px;font-size:42.80px;color:#1a1a1a;-webkit-text-stroke:0.55px #1a1a1a;">Doctor Strange</div>
<div class="t" style="left:1301.88px;top:2025.96px;font-size:42.40px;color:#1a1a1a;-webkit-text-stroke:0.55px #1a1a1a;">Hunt Shadow</div>
</body></html>
